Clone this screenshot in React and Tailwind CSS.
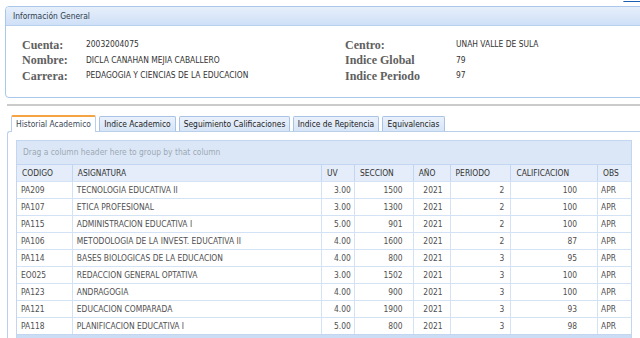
import React from "react";

// Datos del historial academico
const filas = [
  ["PA209", "TECNOLOGIA EDUCATIVA II", "3.00", "1500", "2021", "2", "100", "APR"],
  ["PA107", "ETICA PROFESIONAL", "3.00", "1300", "2021", "2", "100", "APR"],
  ["PA115", "ADMINISTRACION EDUCATIVA I", "5.00", "901", "2021", "2", "100", "APR"],
  ["PA106", "METODOLOGIA DE LA INVEST. EDUCATIVA II", "4.00", "1600", "2021", "2", "87", "APR"],
  ["PA114", "BASES BIOLOGICAS DE LA EDUCACION", "4.00", "800", "2021", "3", "95", "APR"],
  ["EO025", "REDACCION GENERAL OPTATIVA", "3.00", "1502", "2021", "3", "100", "APR"],
  ["PA123", "ANDRAGOGIA", "4.00", "900", "2021", "3", "100", "APR"],
  ["PA121", "EDUCACION COMPARADA", "4.00", "1900", "2021", "3", "93", "APR"],
  ["PA118", "PLANIFICACION EDUCATIVA I", "5.00", "800", "2021", "3", "98", "APR"],
];

const columnas = [
  { titulo: "CODIGO", w: "w-[55px]", celda: "pl-[4px]" },
  { titulo: "ASIGNATURA", w: "w-[250px]", celda: "pl-[4px]" },
  { titulo: "UV", w: "w-[33px]", celda: "justify-end pr-[3px]" },
  { titulo: "SECCION", w: "w-[59px]", celda: "justify-end pr-[10px]" },
  { titulo: "AÑO", w: "w-[37px]", celda: "justify-end pr-[7px]" },
  { titulo: "PERIODO", w: "w-[61px]", celda: "justify-end pr-[6px]" },
  { titulo: "CALIFICACION", w: "w-[87px]", celda: "justify-end pr-[20px]" },
  { titulo: "OBS", w: "w-[34px]", celda: "pl-[3px]" },
];

const tabs = [
  { nombre: "Historial Academico", w: "w-[85px]", activo: true },
  { nombre: "Indice Academico", w: "w-[77px]" },
  { nombre: "Seguimiento Calificaciones", w: "w-[111px]" },
  { nombre: "Indice de Repitencia", w: "w-[86px]" },
  { nombre: "Equivalencias", w: "w-[63px]" },
];

function Dato({ label, valor, ancho }) {
  return (
    <div className="flex h-[15.5px] items-center">
      <span className={`${ancho} font-['Liberation_Serif',serif] text-[12px] font-bold text-[#606060]`}>{label}</span>
      <span className="text-[8.4px] text-[#333]">{valor}</span>
    </div>
  );
}

export default function App() {
  return (
    <div className="h-[338px] w-[640px] overflow-hidden bg-white font-['DejaVu_Sans_Condensed','DejaVu_Sans',sans-serif] text-[8.4px] text-[#505050]">
      {/* Enlace superior */}
      <div className="flex h-[6px] justify-end">
        <a href="#" className="-mt-[7px] mr-[-3px] text-[8.4px] leading-[9px] text-[#1b5fb0] underline">Atrás</a>
      </div>

      {/* Informacion general */}
      <div className="ml-[5px] h-[92px] w-[660px] rounded-[4px] border border-[#aac7ea] bg-white">
        <div className="flex h-[19px] items-center rounded-t-[3px] border-b border-[#b7d0ee] bg-gradient-to-b from-[#e6effb] to-[#cfe0f7] pl-[7px] text-[8.4px] text-[#2f3b4a]">
          Información General
        </div>
        <div className="flex pt-[11px] pl-[16px]">
          <div className="w-[323px]">
            <Dato ancho="w-[64px]" label="Cuenta:" valor="20032004075" />
            <Dato ancho="w-[64px]" label="Nombre:" valor="DICLA CANAHAN MEJIA CABALLERO" />
            <Dato ancho="w-[64px]" label="Carrera:" valor="PEDAGOGIA Y CIENCIAS DE LA EDUCACION" />
          </div>
          <div>
            <Dato ancho="w-[111px]" label="Centro:" valor="UNAH VALLE DE SULA" />
            <Dato ancho="w-[111px]" label="Indice Global" valor="79" />
            <Dato ancho="w-[111px]" label="Indice Periodo" valor="97" />
          </div>
        </div>
      </div>

      {/* Separador */}
      <div className="mt-[6px] ml-[7px] border-t-2 border-[#cbcbcb]" />

      {/* Pestañas */}
      <div className="mt-[9px] ml-[7px]">
        <div className="flex items-end gap-[3px] pl-[4px]">
          {tabs.map((t) =>
            t.activo ? (
              <div
                key={t.nombre}
                className={`${t.w} relative z-10 -mb-px flex h-[17px] items-center justify-center rounded-t-[2px] border-x border-t-2 border-x-[#b9cfea] border-t-[#f5a444] bg-white text-[8.4px] text-[#3a4656]`}
              >
                {t.nombre}
              </div>
            ) : (
              <div
                key={t.nombre}
                className={`${t.w} flex h-[15px] items-center justify-center rounded-t-[2px] border-x border-t border-[#a9c3e4] bg-gradient-to-b from-[#eaf1fb] to-[#d7e5f6] text-[8.4px] text-[#222]`}
              >
                {t.nombre}
              </div>
            )
          )}
        </div>

        <div className="h-[220px] rounded-tl-[3px] border-t border-l border-[#b9cfea] pt-[8px] pl-[8px]">
          <div className="w-[616px] border border-[#c2d6ef]">
            <div className="flex h-[23px] items-center bg-[#dbe7f6] pl-[6px] text-[8.4px] text-[#9ba7b5]">
              Drag a column header here to group by that column
            </div>
            <div className="flex h-[17px] border-t border-[#c2d6ef] bg-[#e4edf9]">
              {columnas.map((c, i) => (
                <div
                  key={c.titulo}
                  className={`${c.w} flex items-center pl-[5px] text-[#333] ${i > 0 ? "border-l border-[#c2d6ef]" : ""}`}
                >
                  {c.titulo}
                </div>
              ))}
            </div>
            {filas.map((f) => (
              <div key={f[0]} className="flex h-[17px] border-t border-[#d3e2f4] bg-white">
                {f.map((v, i) => (
                  <div
                    key={i}
                    className={`${columnas[i].w} flex items-center ${columnas[i].celda} ${i > 0 ? "border-l border-[#d3e2f4]" : ""}`}
                  >
                    {v}
                  </div>
                ))}
              </div>
            ))}
            <div className="h-[10px] border-t border-[#c2d6ef] bg-[#cbddf4]" />
          </div>
        </div>
      </div>
    </div>
  );
}
